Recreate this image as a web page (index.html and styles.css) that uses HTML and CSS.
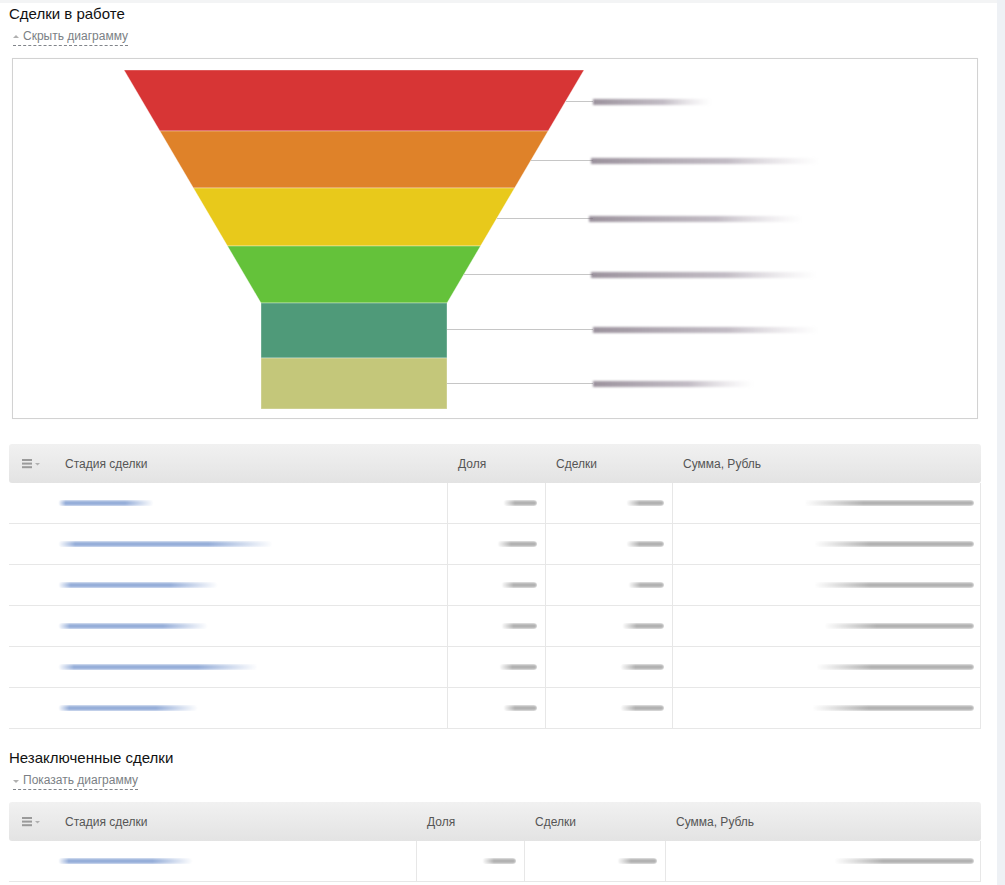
FILE: index.html
```html
<!DOCTYPE html>
<html lang="ru">
<head>
<meta charset="utf-8">
<title>Сделки в работе</title>
<link rel="stylesheet" href="styles.css">
</head>
<body>
<div class="page">
  <section class="block">
    <h2 class="title">Сделки в работе</h2>
    <a class="toggle"><span class="tri tri-up"></span>Скрыть диаграмму</a>
    <div class="chart">
      <svg width="964" height="359" viewBox="13 59 964 359" xmlns="http://www.w3.org/2000/svg">
        <defs>
          <linearGradient id="lbl" x1="0" y1="0" x2="1" y2="0">
            <stop offset="0" stop-color="#7a6e7c" stop-opacity="0.75"/>
            <stop offset="0.6" stop-color="#9a909e" stop-opacity="0.6"/>
            <stop offset="1" stop-color="#c8c0ca" stop-opacity="0"/>
          </linearGradient>
          <filter id="bl" x="-10%" y="-200%" width="120%" height="500%">
            <feGaussianBlur stdDeviation="1.3"/>
          </filter>
        </defs>
        <g stroke="#ffffff" stroke-opacity="0.35" stroke-width="1">
          <polygon points="124,70 584,70 548.1,131 159.9,131" fill="#d73535"/>
          <polygon points="159.9,131 548.1,131 514.6,188 193.4,188" fill="#df8229"/>
          <polygon points="193.4,188 514.6,188 480.5,246 227.5,246" fill="#e8c91b"/>
          <polygon points="227.5,246 480.5,246 447,303 261,303" fill="#64c23a"/>
          <rect x="261" y="303" width="186" height="55" fill="#4f9a79"/>
          <rect x="261" y="358" width="186" height="51" fill="#c4c77a"/>
        </g>
        <g stroke="#c6c6c6" stroke-width="1">
          <line x1="566" y1="101.5" x2="593" y2="101.5"/>
          <line x1="531" y1="160.5" x2="593" y2="160.5"/>
          <line x1="497" y1="218.5" x2="593" y2="218.5"/>
          <line x1="464" y1="274.5" x2="593" y2="274.5"/>
          <line x1="447" y1="329.5" x2="593" y2="329.5"/>
          <line x1="447" y1="383.5" x2="593" y2="383.5"/>
        </g>
        <g fill="url(#lbl)" filter="url(#bl)">
          <rect x="593" y="99" width="118" height="6"/>
          <rect x="591" y="158" width="228" height="6"/>
          <rect x="589" y="216" width="214" height="6"/>
          <rect x="591" y="272" width="226" height="6"/>
          <rect x="593" y="327" width="226" height="6"/>
          <rect x="593" y="381" width="160" height="6"/>
        </g>
      </svg>
    </div>
    <div class="tbl t1">
      <div class="row head">
        <div class="hc icon"><svg width="20" height="10" viewBox="0 0 20 10"><rect x="0" y="0" width="10" height="2" fill="#9a9a9a"/><rect x="0" y="3.6" width="10" height="2" fill="#9a9a9a"/><rect x="0" y="7.2" width="10" height="2" fill="#9a9a9a"/><polygon points="13,4 18,4 15.5,6.5" fill="#b0b0b0"/></svg></div>
        <div class="hc">Стадия сделки</div>
        <div class="hc">Доля</div>
        <div class="hc">Сделки</div>
        <div class="hc">Сумма, Рубль</div>
      </div>
      <div class="row">
        <div class="c"></div><div class="c name"><span class="blr blue" style="width:96px"></span></div>
        <div class="c num"><span class="blr gray" style="width:34px"></span></div>
        <div class="c num"><span class="blr gray" style="width:38px"></span></div>
        <div class="c num last"><span class="blr gray" style="width:170px"></span></div>
      </div>
      <div class="row">
        <div class="c"></div><div class="c name"><span class="blr blue" style="width:215px"></span></div>
        <div class="c num"><span class="blr gray" style="width:40px"></span></div>
        <div class="c num"><span class="blr gray" style="width:38px"></span></div>
        <div class="c num last"><span class="blr gray" style="width:160px"></span></div>
      </div>
      <div class="row">
        <div class="c"></div><div class="c name"><span class="blr blue" style="width:160px"></span></div>
        <div class="c num"><span class="blr gray" style="width:36px"></span></div>
        <div class="c num"><span class="blr gray" style="width:36px"></span></div>
        <div class="c num last"><span class="blr gray" style="width:160px"></span></div>
      </div>
      <div class="row">
        <div class="c"></div><div class="c name"><span class="blr blue" style="width:150px"></span></div>
        <div class="c num"><span class="blr gray" style="width:36px"></span></div>
        <div class="c num"><span class="blr gray" style="width:42px"></span></div>
        <div class="c num last"><span class="blr gray" style="width:150px"></span></div>
      </div>
      <div class="row">
        <div class="c"></div><div class="c name"><span class="blr blue" style="width:200px"></span></div>
        <div class="c num"><span class="blr gray" style="width:38px"></span></div>
        <div class="c num"><span class="blr gray" style="width:44px"></span></div>
        <div class="c num last"><span class="blr gray" style="width:158px"></span></div>
      </div>
      <div class="row">
        <div class="c"></div><div class="c name"><span class="blr blue" style="width:140px"></span></div>
        <div class="c num"><span class="blr gray" style="width:34px"></span></div>
        <div class="c num"><span class="blr gray" style="width:44px"></span></div>
        <div class="c num last"><span class="blr gray" style="width:162px"></span></div>
      </div>
    </div>
  </section>

  <section class="block second">
    <h2 class="title">Незаключенные сделки</h2>
    <a class="toggle"><span class="tri tri-down"></span>Показать диаграмму</a>
    <div class="tbl t2">
      <div class="row head">
        <div class="hc icon"><svg width="20" height="10" viewBox="0 0 20 10"><rect x="0" y="0" width="10" height="2" fill="#9a9a9a"/><rect x="0" y="3.6" width="10" height="2" fill="#9a9a9a"/><rect x="0" y="7.2" width="10" height="2" fill="#9a9a9a"/><polygon points="13,4 18,4 15.5,6.5" fill="#b0b0b0"/></svg></div>
        <div class="hc">Стадия сделки</div>
        <div class="hc">Доля</div>
        <div class="hc">Сделки</div>
        <div class="hc">Сумма, Рубль</div>
      </div>
      <div class="row">
        <div class="c"></div><div class="c name"><span class="blr blue" style="width:135px"></span></div>
        <div class="c num"><span class="blr gray" style="width:34px"></span></div>
        <div class="c num"><span class="blr gray" style="width:40px"></span></div>
        <div class="c num last"><span class="blr gray" style="width:140px"></span></div>
      </div>
    </div>
  </section>
</div>
</body>
</html>
```

FILE: styles.css
```css
html, body {
  margin: 0;
  padding: 0;
}
body {
  background: #eef1f5;
  font-family: "Liberation Sans", Arial, sans-serif;
  color: #111;
}
.page {
  width: 997px;
  height: 882px;
  background: #fff;
  border-top: 3px solid #f3f4f5;
}
.block {
  padding-left: 9px;
}
.block.second {
  margin-top: 20px;
}
.title {
  margin: 2px 0 0 0;
  font-size: 15px;
  line-height: 18px;
  font-weight: normal;
  color: #111;
}
.toggle {
  display: block;
  width: fit-content;
  margin: 6px 0 0 4px;
  font-size: 12px;
  line-height: 15px;
  color: #7b7f85;
  padding-bottom: 1px;
  border-bottom: 1px dashed #80848a;
  cursor: pointer;
}
.tri {
  display: inline-block;
  width: 0;
  height: 0;
  border-left: 3px solid transparent;
  border-right: 3px solid transparent;
  margin-right: 4px;
  vertical-align: 2px;
}
.tri-up {
  border-bottom: 3px solid #b0b0b0;
}
.tri-down {
  border-top: 3px solid #b0b0b0;
  vertical-align: 1px;
}
.chart {
  margin: 12px 0 0 3px;
  width: 964px;
  height: 359px;
  border: 1px solid #d2d2d2;
  box-shadow: 0 0 1px rgba(0,0,0,0.05);
  background: #fff;
}
.chart svg {
  display: block;
}
.tbl {
  width: 972px;
  margin-top: 25px;
}
.t2 {
  margin-top: 12px;
}
.row {
  display: grid;
  box-sizing: border-box;
  height: 41px;
  border-bottom: 1px solid #e7e7e7;
}
.t1 .row {
  grid-template-columns: 45px 393px 98px 127px 309px;
}
.t2 .row {
  grid-template-columns: 45px 362px 108px 141px 316px;
}
.row.head {
  height: 39px;
  border-bottom: none;
  border-radius: 3px;
  background: linear-gradient(to bottom, #f1f1f1 0%, #e3e3e3 100%);
  align-items: center;
}
.hc {
  font-size: 12px;
  line-height: 14px;
  color: #555;
  padding-left: 11px;
}
.hc.icon {
  padding-left: 13px;
  display: flex;
  align-items: center;
}
.hc.icon svg {
  display: block;
}
.c {
  display: flex;
  align-items: center;
  box-sizing: border-box;
}
.c.name {
  padding-left: 4px;
}
.c.num {
  justify-content: flex-end;
  padding-right: 8px;
  border-left: 1px solid #e7e7e7;
}
.c.num.last {
  border-right: 1px solid #e7e7e7;
  padding-right: 6px;
}
.blr {
  display: inline-block;
  height: 6px;
  border-radius: 3px;
  filter: blur(1.3px);
}
.blr.blue {
  background: linear-gradient(to bottom, #c6d3ea 0%, #86a2d3 45%, #b0c2e3 100%);
  -webkit-mask-image: linear-gradient(to right, rgba(0,0,0,0) 0%, #000 8%, #000 70%, rgba(0,0,0,0) 100%);
  mask-image: linear-gradient(to right, rgba(0,0,0,0) 0%, #000 8%, #000 70%, rgba(0,0,0,0) 100%);
}
.blr.gray {
  background: linear-gradient(to bottom, #d6d6d6 0%, #a4a4a4 45%, #cacaca 100%);
  -webkit-mask-image: linear-gradient(to right, rgba(0,0,0,0) 0%, #000 35%, #000 100%);
  mask-image: linear-gradient(to right, rgba(0,0,0,0) 0%, #000 35%, #000 100%);
}
```
